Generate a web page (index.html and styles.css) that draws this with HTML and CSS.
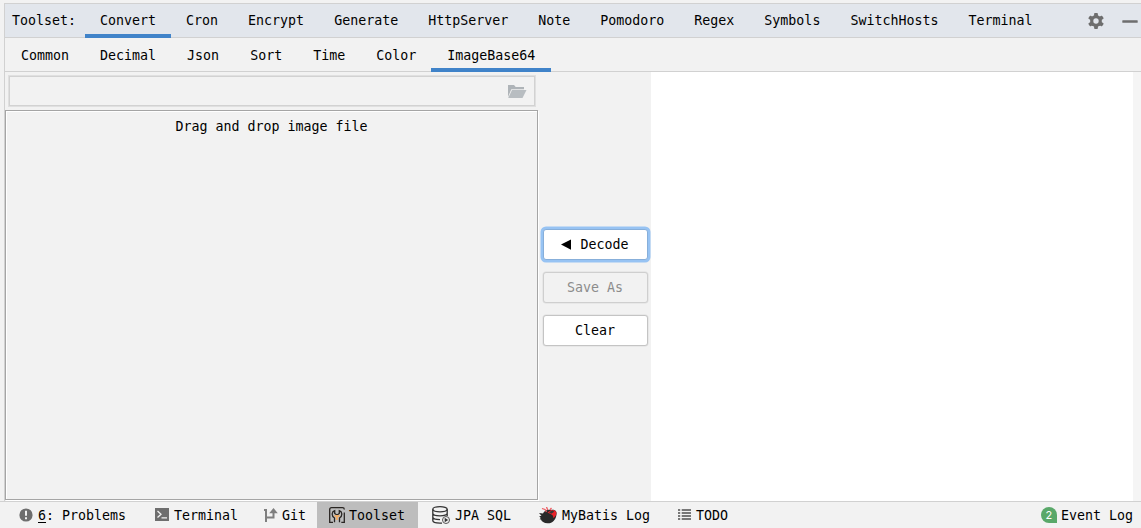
FILE: index.html
```html
<!DOCTYPE html>
<html lang="en">
<head>
<meta charset="utf-8">
<title>Toolset</title>
<link rel="stylesheet" href="styles.css">
</head>
<body>
<div class="app">
  <main class="window">
    <header class="header">
      <span class="title">Toolset:</span>
      <nav class="tabs">
        <a class="tab active">Convert</a><a class="tab">Cron</a><a class="tab">Encrypt</a><a class="tab">Generate</a><a class="tab">HttpServer</a><a class="tab">Note</a><a class="tab">Pomodoro</a><a class="tab">Regex</a><a class="tab">Symbols</a><a class="tab">SwitchHosts</a><a class="tab">Terminal</a>
      </nav>
      <svg class="gear" width="16" height="16" viewBox="0 0 16 16"><g fill="#6e6e6e"><circle cx="8" cy="8" r="5.9"/><rect x="6.1" y="0" width="3.8" height="16" rx=".9"/><rect x="6.1" y="0" width="3.8" height="16" rx=".9" transform="rotate(60 8 8)"/><rect x="6.1" y="0" width="3.8" height="16" rx=".9" transform="rotate(120 8 8)"/></g><circle cx="8" cy="8" r="2.7" fill="#e2e6ec"/></svg>
      <svg class="minimize" width="16" height="3" viewBox="0 0 16 3"><rect x=".3" y=".3" width="15.4" height="2.4" rx=".5" fill="#6e6e6e"/></svg>
    </header>
    <nav class="subtabs">
      <a class="subtab">Common</a><a class="subtab">Decimal</a><a class="subtab">Json</a><a class="subtab">Sort</a><a class="subtab">Time</a><a class="subtab">Color</a><a class="subtab active">ImageBase64</a>
    </nav>
    <section class="content">
      <div class="source">
        <div class="field">
          <svg width="20" height="15" viewBox="0 0 20 15"><path fill="#afb4b8" d="M1 13V1h6l1.700 2H17v2.200H4.300z"/><path fill="#b8bdc1" d="M5 6h14.500l-4 8H1.200z"/></svg>
        </div>
        <div class="drop">Drag and drop image file</div>
      </div>
      <div class="actions">
        <button class="button focused"><svg width="10" height="12" viewBox="0 0 10 12"><path d="M10 .4v10.400L0 5.600z"/></svg>Decode</button>
        <button class="button disabled">Save As</button>
        <button class="button">Clear</button>
      </div>
      <div class="output"></div>
      <div class="scrollbar"></div>
    </section>
  </main>
  <footer class="status">
    <div class="item problems"><svg width="14" height="14" viewBox="0 0 14 14"><circle cx="7" cy="7" r="6.600" fill="#6e6e6e"/><path fill="#f2f2f2" d="M6 2.800h2v5H6zM6 9.300h2v2H6z"/></svg><span><u>6</u>: Problems</span></div>
    <div class="item terminal"><svg width="14" height="14" viewBox="0 0 14 14"><path fill="#6e6e6e" d="M0 0h14v13H0z"/><path fill="none" stroke="#f2f2f2" stroke-width="1.300" d="M2.500 3l3.500 3.200-3.500 3.200M6.500 9.800H12"/></svg><span>Terminal</span></div>
    <div class="item git"><svg width="14" height="14" viewBox="0 0 14 14"><path fill="none" stroke="#7f7f7f" stroke-width="2" d="M2 1v13M2 9.500h7.500V4"/><path fill="#7f7f7f" d="M9.500 0l4.300 5.200H5.200zM0 1h3v2H0z"/></svg><span>Git</span></div>
    <div class="item toolset"><svg width="16" height="16" viewBox="0 0 16 16"><path fill="none" stroke="#292522" stroke-width="1.300" d="M4 15.300H.7V2.500Q.7.700 2.500.700h11q1.800 0 1.800 1.800M15.300 5.500v9.800h-3M5.500 15.300V11Q3 9.500 3.200 6.800 3.400 4.400 5.700 3.700V6.500L8 8l2.300-1.500V3.700q2.300.700 2.500 3.100Q13 9.500 10.500 11v4.300"/><path d="M5.500 9h5M8 9v4" stroke="#efad69" stroke-width="2"/></svg><span>Toolset</span></div>
    <div class="item jpa"><svg width="18" height="18" viewBox="0 0 18 18"><g fill="none" stroke="#333" stroke-width="1.300"><ellipse cx="8" cy="3.300" rx="7.200" ry="2.600"/><path d="M.8 3.300v4c0 1.500 3 2.600 7.200 2.600s7.200-1.100 7.200-2.600v-4M.8 7.300v3.800c0 1.500 3.200 2.600 7.200 2.600M.8 11.100v3.400c0 1.500 3.200 2.600 7.200 2.600h2M15.200 7.300V10"/></g><circle cx="14" cy="14" r="3.500" fill="#f2f2f2" stroke="#555" stroke-width="1"/><path d="M12.700 11.800v4.400l3.500-2.200z" fill="#333"/></svg><span>JPA SQL</span></div>
    <div class="item mybatis"><svg width="19" height="17" viewBox="0 0 19 17"><path fill="#292929" d="M0 6l4 .5C5 3.500 9 2 12 3c4-.8 6.500 1.500 5.400 5.200C16.500 13 13.500 16.500 8.500 16.300 5 16.200 2.500 14.500 2 12.500L.5 12.300l1.300-1.400L.2 9.300l2.300-.5z"/><path fill="#e8232a" d="M8.500 5.500 12 3.200c3-.7 5.700.7 5.400 3.400-.3 2.500-2 4.200-3.400 4.200.5-1.500-.1-2.400-1.500-3.200z"/><path fill="#353535" d="m10 5.300 3.500-2 1.700 1.500-3 2z"/><path fill="none" stroke="#ee5960" stroke-width="1.300" d="M3 1.500l3 1L7.500 5M7.500 0l1.200 3M12.500 1l-1.500 1.700"/></svg><span>MyBatis Log</span></div>
    <div class="item todo"><svg width="13" height="12" viewBox="0 0 13 12"><path fill="#777" d="M0 0h2.200v2H0zM3.700 0H13v2H3.700zM0 3h2.200v2H0zM3.700 3H13v2H3.700zM0 6h2.200v2H0zM3.700 6H13v2H3.700zM0 9h2.200v2H0zM3.700 9H13v2H3.700z"/></svg><span>TODO</span></div>
    <div class="item events"><span class="count">2</span><span>Event Log</span></div>
  </footer>
</div>
</body>
</html>
```
FILE: styles.css
```css
* { box-sizing: border-box; }
body {
  margin: 0;
  background: #f2f2f2;
  color: #000;
  font: 13.3px/18px "DejaVu Sans Mono", monospace;
  overflow: hidden;
}
.app { display: flex; flex-direction: column; width: 1141px; height: 528px; }
.window {
  display: flex;
  flex-direction: column;
  height: 498px;
  margin: 3px 0 0 4px;
  border-left: 1px solid #d1d1d1;
}
.header {
  display: flex;
  align-items: center;
  height: 35px;
  padding: 0 3px 0 7px;
  background: #e2e6ec;
  border: solid #d1d1d1;
  border-width: 1px 0;
}
.title { width: 73px; }
.tabs { display: flex; }
.tab {
  height: 34px;
  padding: 8px 15px 0;
  margin-bottom: -1px;
}
.subtabs { display: flex; height: 34px; border-bottom: 1px solid #d1d1d1; }
.subtab { height: 34px; padding: 9px 16px 0; margin-right: -1px; }
.active { border-bottom: 4px solid #4083c9; }
.gear { margin-left: auto; }
.minimize { margin: 1px -4px 0 18px; }
.header .minimize { margin-right: 0; }
.header { padding-right: 3px; }
.content { display: flex; flex: 1; min-height: 0; }
.source { width: 533px; padding-top: 3px; }
.field {
  display: flex;
  align-items: center;
  justify-content: flex-end;
  width: 528px;
  height: 32px;
  margin: 0 0 3px 3px;
  padding-right: 8px;
  border: 1px solid #e0e0e0;
  box-shadow: inset 0 0 0 1px #d2d2d2;
}
.drop {
  height: 390px;
  padding-top: 7px;
  border: 1px solid #a5a5a5;
  box-shadow: inset 1px 1px #fff, 1px 1px #fff;
  text-align: center;
}
.actions {
  display: flex;
  flex-direction: column;
  align-items: center;
  gap: 12px;
  width: 113px;
  padding: 157px 0 0 1px;
}
.button {
  display: flex;
  align-items: center;
  justify-content: center;
  width: 105px;
  height: 31px;
  padding: 0;
  background: #fff;
  border: 1px solid #c4c4c4;
  border-radius: 3px;
  box-shadow: 0 0 0 .5px #dedede;
  color: #000;
  font: inherit;
}
.button svg { margin-right: 9px; }
.focused { border-color: #87afda; box-shadow: 0 0 0 2.5px #97c3f3; }
.disabled { background: #f2f2f2; border-color: #cfcfcf; color: #8c8c8c; }
.output { width: 482px; background: #fff; }
.scrollbar { flex: 1; background: #f5f5f5; }
.status { display: flex; height: 27px; border-top: 1px solid #d1d1d1; }
.item { display: flex; align-items: center; height: 26px; white-space: pre; }
.item span:not(.count) { padding-top: 2px; }
.problems { width: 136px; padding-left: 19px; gap: 5px; }
.problems u { text-underline-offset: 2px; }
.terminal { width: 115px; padding-left: 19px; gap: 5px; }
.git { width: 66px; padding-left: 13px; gap: 4px; }
.toolset { width: 101px; padding-left: 12px; gap: 4px; background: #bdbdbd; }
.jpa { width: 108px; padding-left: 14px; gap: 5px; }
.mybatis { width: 139px; padding-left: 13px; gap: 4px; }
.todo { padding-left: 13px; gap: 5px; }
.events { margin-left: auto; padding-right: 8px; gap: 4px; }
.count {
  width: 16px;
  height: 16px;
  background: #59a869;
  border-radius: 8px 8px 0 8px;
  color: #fff;
  font: 11px/16px Inter, sans-serif;
  text-align: center;
}
```
